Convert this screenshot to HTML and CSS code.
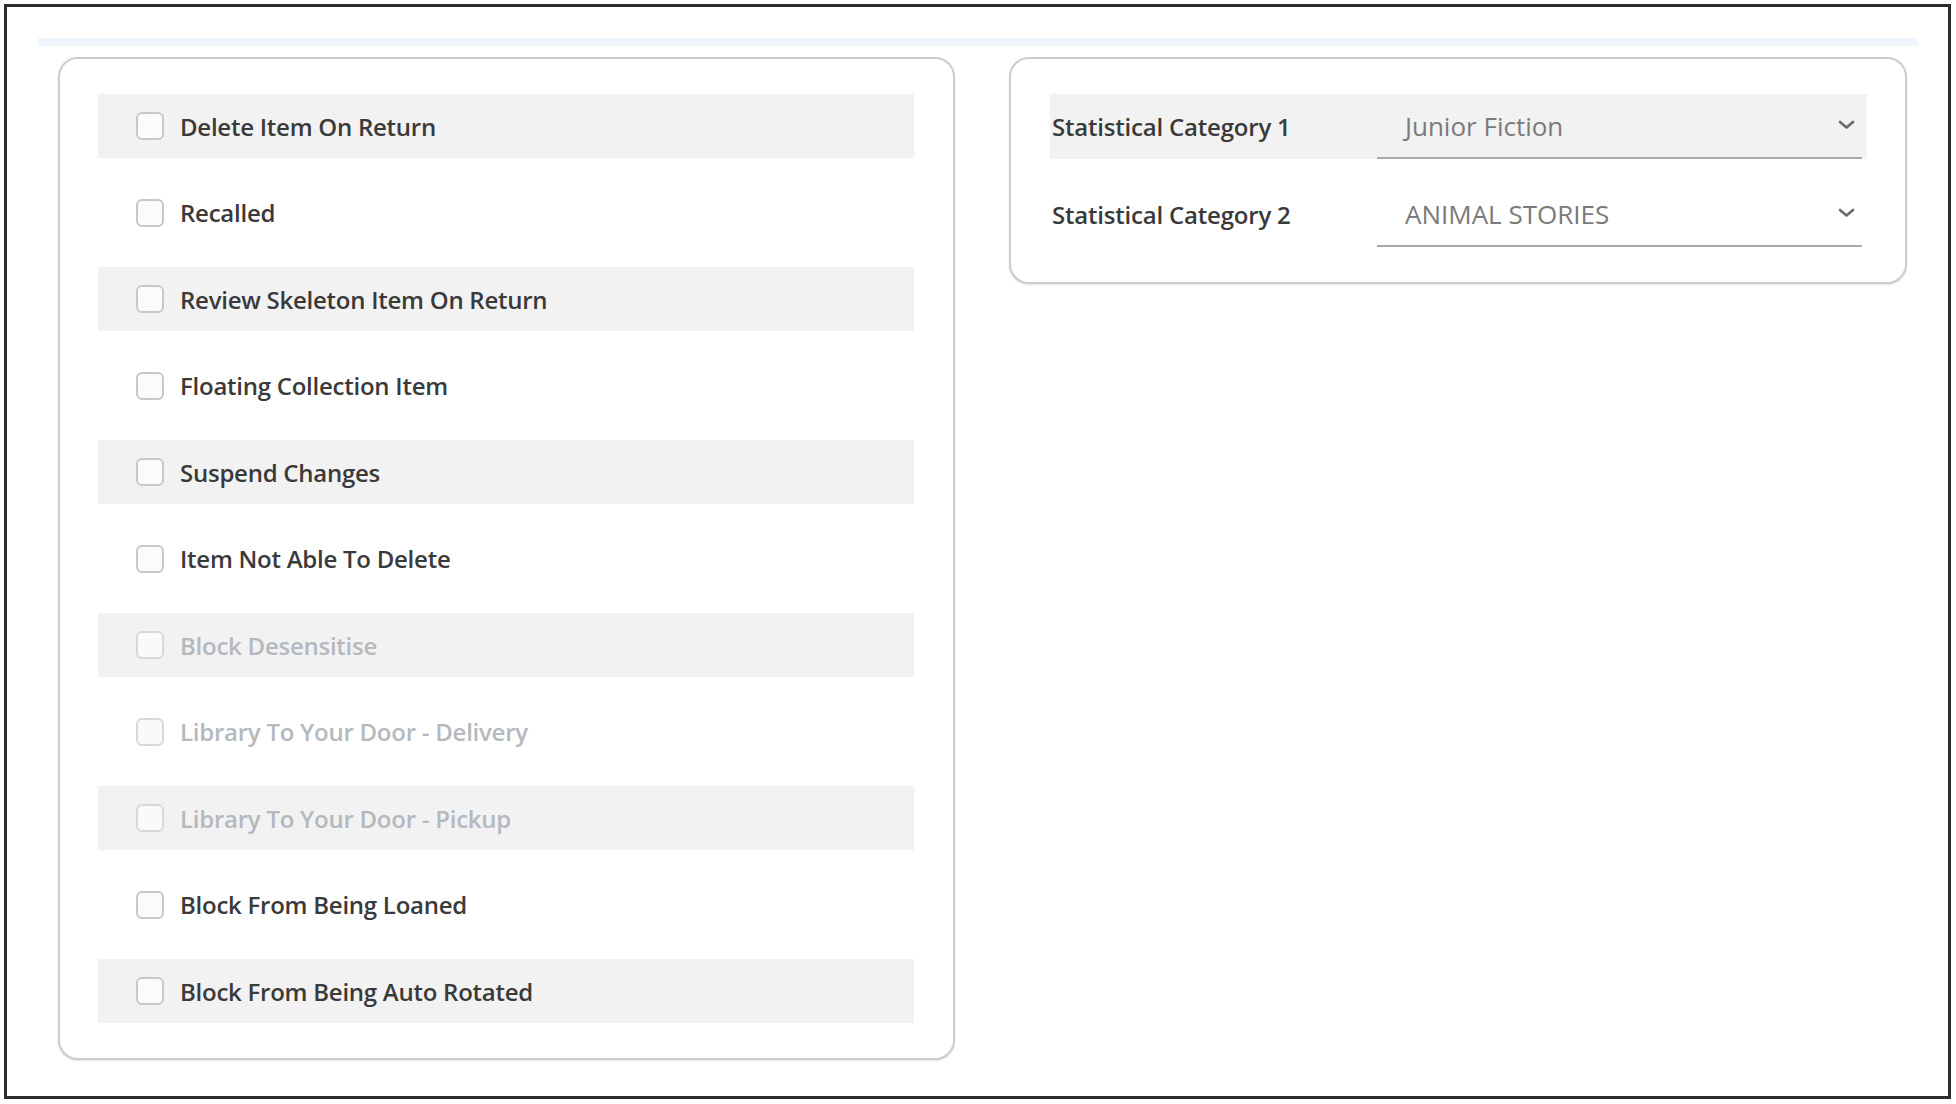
FILE: index.html
```html
<!DOCTYPE html>
<html lang="en">
<head>
<meta charset="utf-8">
<title>Item Flags</title>
<link rel="stylesheet" href="styles.css">
</head>
<body>
<div class="frame">
  <div class="strip"></div>
  <div class="panels">
    <section class="card flags">
      <label class="flag shaded"><input type="checkbox" class="box"><span>Delete Item On Return</span></label>
      <label class="flag"><input type="checkbox" class="box"><span>Recalled</span></label>
      <label class="flag shaded"><input type="checkbox" class="box"><span>Review Skeleton Item On Return</span></label>
      <label class="flag"><input type="checkbox" class="box"><span>Floating Collection Item</span></label>
      <label class="flag shaded"><input type="checkbox" class="box"><span>Suspend Changes</span></label>
      <label class="flag"><input type="checkbox" class="box"><span>Item Not Able To Delete</span></label>
      <label class="flag shaded disabled"><input type="checkbox" class="box" disabled><span>Block Desensitise</span></label>
      <label class="flag disabled"><input type="checkbox" class="box" disabled><span>Library To Your Door - Delivery</span></label>
      <label class="flag shaded disabled"><input type="checkbox" class="box" disabled><span>Library To Your Door - Pickup</span></label>
      <label class="flag"><input type="checkbox" class="box"><span>Block From Being Loaned</span></label>
      <label class="flag shaded"><input type="checkbox" class="box"><span>Block From Being Auto Rotated</span></label>
    </section>
    <section class="card cats">
      <div class="cat shaded">
        <div class="cat-label">Statistical Category 1</div>
        <div class="select">
          <span class="value">Junior Fiction</span>
          <svg class="chev" width="17" height="10" viewBox="0 0 17 10"><polyline points="2,2 8.5,7.5 15,2" fill="none" stroke="#6a6a6a" stroke-width="2.6" stroke-linecap="round" stroke-linejoin="round"/></svg>
        </div>
      </div>
      <div class="cat">
        <div class="cat-label">Statistical Category 2</div>
        <div class="select">
          <span class="value">ANIMAL STORIES</span>
          <svg class="chev" width="17" height="10" viewBox="0 0 17 10"><polyline points="2,2 8.5,7.5 15,2" fill="none" stroke="#6a6a6a" stroke-width="2.6" stroke-linecap="round" stroke-linejoin="round"/></svg>
        </div>
      </div>
    </section>
  </div>
</div>
</body>
</html>
```
FILE: styles.css
```css
* { box-sizing: border-box; }

html, body {
  margin: 0;
  padding: 0;
  background: #ffffff;
}

body {
  font-family: "Open Sans", "Noto Sans", "Liberation Sans", sans-serif;
  color: #3a3a3a;
}

.frame {
  margin: 4px 5px 5px 4px;
  height: 1095px;
  border: 3px solid #2d2d2d;
  padding-top: 31px;
}

.strip {
  height: 8px;
  margin: 0 30px 0 31px;
  background: #eff5fc;
}

.panels {
  display: grid;
  grid-template-columns: 897px 898px;
  column-gap: 54px;
  padding: 11px 41px 0 51px;
  align-items: start;
}

.card {
  border: 2px solid #cdcdcd;
  border-radius: 20px;
  box-shadow: 0 1px 2px rgba(0, 0, 0, 0.12);
  background: #ffffff;
}

.flags {
  padding: 35px 39px 35px 38px;
  display: flex;
  flex-direction: column;
  gap: 22.5px;
}

.flag {
  height: 64px;
  display: flex;
  align-items: center;
  padding-left: 38px;
  font-size: 24px;
  font-weight: 600;
  color: #3a3a3a;
  letter-spacing: -0.25px;
}

.shaded {
  background: #f2f2f2;
}

.box {
  -webkit-appearance: none;
  appearance: none;
  margin: 0 16px 0 0;
  width: 28px;
  height: 28px;
  flex: none;
  border: 2px solid #c8c8c8;
  border-radius: 6px;
  background: #fbfbfb;
}

.disabled {
  color: #b4b8bf;
}

.disabled .box {
  border-color: #d6d9dc;
  background: #fafafa;
}

.cats {
  padding: 35px 38px 35px 39px;
  display: flex;
  flex-direction: column;
  gap: 23px;
}

.cat {
  height: 65px;
  display: grid;
  grid-template-columns: 327px 485px;
  align-items: center;
}

.cat-label {
  padding-left: 2px;
  font-size: 24px;
  font-weight: 600;
  color: #3a3a3a;
  letter-spacing: -0.2px;
}

.select {
  height: 65px;
  display: flex;
  align-items: center;
  justify-content: space-between;
  padding: 0 7px 0 28px;
  border-bottom: 2px solid #a8a8a8;
}

.value {
  font-size: 26px;
  font-weight: 400;
  color: #7a7a7a;
}

.chev {
  display: block;
  margin-top: -2px;
}
```
